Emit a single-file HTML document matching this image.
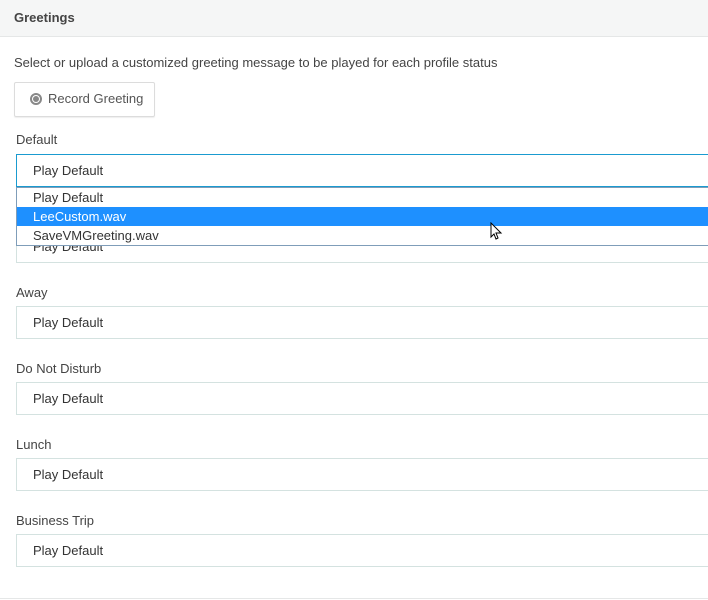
<!DOCTYPE html>
<html><head><style>
body{margin:0;width:708px;height:600px;overflow:hidden;background:#fff;font-family:"Liberation Sans",sans-serif;color:#333;position:relative}
.hd{position:absolute;left:0;top:0;width:708px;height:37px;background:#f5f6f6;border-bottom:1px solid #e5e7e7;font-size:13px;font-weight:bold;color:#444;line-height:36px;padding-left:14px;box-sizing:border-box}
.t{position:absolute;font-size:13px;color:#444}
.btn{position:absolute;left:14px;top:82px;width:141px;height:35px;border:1px solid #dcdcdc;box-sizing:border-box;border-radius:2px;box-shadow:0 1px 1px #eee;font-size:13px;color:#555}
.sel{position:absolute;left:16px;width:700px;height:33px;border:1px solid #d4e2e0;box-sizing:border-box;font-size:13px;color:#333;line-height:32px;padding-left:16px}
.dd{position:absolute;left:16px;top:187px;width:700px;height:59px;border:1px solid #7f9db9;box-sizing:border-box;background:#fff;font-size:13px}
.dd div{height:19px;line-height:19px;padding-left:16px}
</style></head><body>
<div class="hd">Greetings</div>
<div class="t" style="left:14px;top:55px">Select or upload a customized greeting message to be played for each profile status</div>
<div class="btn"><span style="position:absolute;left:15px;top:10px;width:8px;height:8px;border:2px solid #888;border-radius:50%;box-sizing:content-box"></span><span style="position:absolute;left:18px;top:13px;width:6px;height:6px;background:#888;border-radius:50%"></span><span style="position:absolute;left:33px;top:8px">Record Greeting</span></div>
<div class="t" style="left:16px;top:132px">Default</div>
<div class="sel" style="top:154px;border-color:#1a9bd0">Play Default</div>
<div class="sel" style="top:230px">Play Default</div>
<div class="dd"><div>Play Default</div><div style="background:#1e90ff;color:#fff">LeeCustom.wav</div><div>SaveVMGreeting.wav</div></div>
<svg style="position:absolute;left:490px;top:222px" width="14" height="20" viewBox="0 0 14 20"><path d="M1 1 L1 15 L4 12 L6 17 L8 16 L6 11 L11 11 Z" fill="#fff" stroke="#000" stroke-width="1"/></svg>
<div class="t" style="left:16px;top:285px">Away</div>
<div class="sel" style="top:306px">Play Default</div>
<div class="t" style="left:16px;top:361px">Do Not Disturb</div>
<div class="sel" style="top:382px">Play Default</div>
<div class="t" style="left:16px;top:437px">Lunch</div>
<div class="sel" style="top:458px">Play Default</div>
<div class="t" style="left:16px;top:513px">Business Trip</div>
<div class="sel" style="top:534px">Play Default</div>
<div style="position:absolute;left:0;top:598px;width:708px;height:1px;background:#e5e7e7"></div>
</body></html>
